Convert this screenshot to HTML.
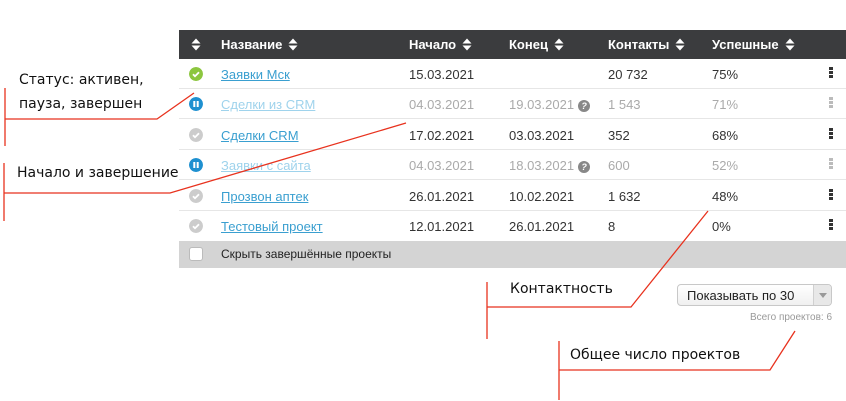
<!DOCTYPE html>
<html><head><meta charset="utf-8"><style>
*{margin:0;padding:0;box-sizing:border-box}
body{width:846px;height:401px;background:#fff;position:relative;overflow:hidden;font-family:"Liberation Sans",Arial,sans-serif;font-size:13px;color:#333}
.hdr{position:absolute;left:179px;top:30px;width:667px;height:29px;background:#3b3c3e}
.hdr span{position:absolute;top:7px;color:#fff;font-weight:bold;font-size:13px}
.srt{display:inline-block;width:10px;height:13px;vertical-align:-2px;margin-left:6px}
.row{position:absolute;left:179px;width:667px;height:30px;border-bottom:1px solid #e6e6e6}
.row span{position:absolute;top:8px}
.row a{position:absolute;left:42px;top:8px;color:#3a9fd0;text-decoration:underline}
.dim span{color:#aaa}.dim a{color:#9fd3ec}
.ico{position:absolute;left:10px;top:8px;width:14px;height:14px;border-radius:50%}
.dots{left:650px;top:8px;width:4px}
.dots i{display:block;width:4px;height:3px;background:#333;margin-bottom:1px}
.dim .dots i{background:#bbb}
.foot{position:absolute;left:179px;top:241px;width:667px;height:27px;background:#d4d4d4}
.cb{position:absolute;left:10px;top:6px;width:14px;height:14px;background:#fff;border:1px solid #bbb;border-radius:3px}
.ann{position:absolute;font-family:"DejaVu Sans","Liberation Sans",sans-serif;font-size:14px;color:#111;line-height:24px}
.q{display:inline-block;width:12px;height:12px;border-radius:50%;background:#888;color:#fff;font-size:9px;font-weight:bold;text-align:center;line-height:12px;margin-left:4px;vertical-align:0}
</style></head><body>
<svg width="0" height="0" style="position:absolute"><defs><g id="s"><path d="M0.5 5.5 L5 0.5 L9.5 5.5Z M0.5 7.5 L5 12.5 L9.5 7.5Z" fill="#fff"/></g></defs></svg>
<div class="hdr">
<span style="left:12px"><svg class="srt" style="margin:0"><use href="#s"/></svg></span>
<span style="left:42px">Название<svg class="srt"><use href="#s"/></svg></span>
<span style="left:230px">Начало<svg class="srt"><use href="#s"/></svg></span>
<span style="left:330px">Конец<svg class="srt"><use href="#s"/></svg></span>
<span style="left:429px">Контакты<svg class="srt"><use href="#s"/></svg></span>
<span style="left:533px">Успешные<svg class="srt"><use href="#s"/></svg></span>
</div>

<div class="row" style="top:59px"><svg class="ico" viewBox="0 0 14 14"><circle cx="7" cy="7" r="7" fill="#8cc63f"/><path d="M4 7.2l2 2 4-4" stroke="#fff" stroke-width="1.8" fill="none"/></svg><a>Заявки Мск</a><span style="left:230px">15.03.2021</span><span style="left:429px">20 732</span><span style="left:533px">75%</span><span class="dots"><i></i><i></i><i></i></span></div>
<div class="row dim" style="top:89px"><svg class="ico" viewBox="0 0 14 14"><circle cx="7" cy="7" r="7" fill="#1e90d0"/><rect x="4.3" y="4" width="2" height="6" fill="#fff"/><rect x="7.7" y="4" width="2" height="6" fill="#fff"/></svg><a>Сделки из CRM</a><span style="left:230px">04.03.2021</span><span style="left:330px">19.03.2021<i class="q">?</i></span><span style="left:429px">1 543</span><span style="left:533px">71%</span><span class="dots"><i></i><i></i><i></i></span></div>
<div class="row" style="top:120px"><svg class="ico" viewBox="0 0 14 14"><circle cx="7" cy="7" r="7" fill="#ccc"/><path d="M4 7.2l2 2 4-4" stroke="#fff" stroke-width="1.8" fill="none"/></svg><a>Сделки CRM</a><span style="left:230px">17.02.2021</span><span style="left:330px">03.03.2021</span><span style="left:429px">352</span><span style="left:533px">68%</span><span class="dots"><i></i><i></i><i></i></span></div>
<div class="row dim" style="top:150px"><svg class="ico" viewBox="0 0 14 14"><circle cx="7" cy="7" r="7" fill="#1e90d0"/><rect x="4.3" y="4" width="2" height="6" fill="#fff"/><rect x="7.7" y="4" width="2" height="6" fill="#fff"/></svg><a>Заявки с сайта</a><span style="left:230px">04.03.2021</span><span style="left:330px">18.03.2021<i class="q">?</i></span><span style="left:429px">600</span><span style="left:533px">52%</span><span class="dots"><i></i><i></i><i></i></span></div>
<div class="row" style="top:181px"><svg class="ico" viewBox="0 0 14 14"><circle cx="7" cy="7" r="7" fill="#ccc"/><path d="M4 7.2l2 2 4-4" stroke="#fff" stroke-width="1.8" fill="none"/></svg><a>Прозвон аптек</a><span style="left:230px">26.01.2021</span><span style="left:330px">10.02.2021</span><span style="left:429px">1 632</span><span style="left:533px">48%</span><span class="dots"><i></i><i></i><i></i></span></div>
<div class="row" style="top:211px;border:none"><svg class="ico" viewBox="0 0 14 14"><circle cx="7" cy="7" r="7" fill="#ccc"/><path d="M4 7.2l2 2 4-4" stroke="#fff" stroke-width="1.8" fill="none"/></svg><a>Тестовый проект</a><span style="left:230px">12.01.2021</span><span style="left:330px">26.01.2021</span><span style="left:429px">8</span><span style="left:533px">0%</span><span class="dots"><i></i><i></i><i></i></span></div>
<div class="foot"><div class="cb"></div><span style="position:absolute;left:42px;top:6px;font-size:12px;color:#222">Скрыть завершённые проекты</span></div>

<div style="position:absolute;left:677px;top:284px;width:155px;height:22px;border:1px solid #c8c8c8;border-radius:4px;background:linear-gradient(#fff,#f0f0f0)"><span style="position:absolute;left:9px;top:3px;font-size:13px;color:#222">Показывать по 30</span><div style="position:absolute;right:0;top:0;width:18px;height:20px;border-left:1px solid #d0d0d0;background:#e8e8e8;border-radius:0 3px 3px 0"><span style="position:absolute;left:5px;top:8px;border:4px solid transparent;border-top:5px solid #999;border-bottom:0;width:0;height:0"></span></div></div>
<div style="position:absolute;right:14px;top:312px;font-size:10px;color:#999">Всего проектов: 6</div>

<svg style="position:absolute;left:0;top:0" width="846" height="401"><g stroke="#e8321e" fill="none" stroke-width="1.3">
<path d="M5 88V146M5 119H157L194 93"/>
<path d="M4 163V221M4 193H170L406 123"/>
<path d="M487 282V339M487 307H631L708 211"/>
<path d="M559 341V400M559 370H770L795 331"/>
</g></svg>
<div class="ann" style="left:19px;top:68px">Статус: активен,<br>пауза, завершен</div>
<div class="ann" style="left:17px;top:161px">Начало и завершение</div>
<div class="ann" style="left:510px;top:277px">Контактность</div>
<div class="ann" style="left:570px;top:343px">Общее число проектов</div>
</body></html>
